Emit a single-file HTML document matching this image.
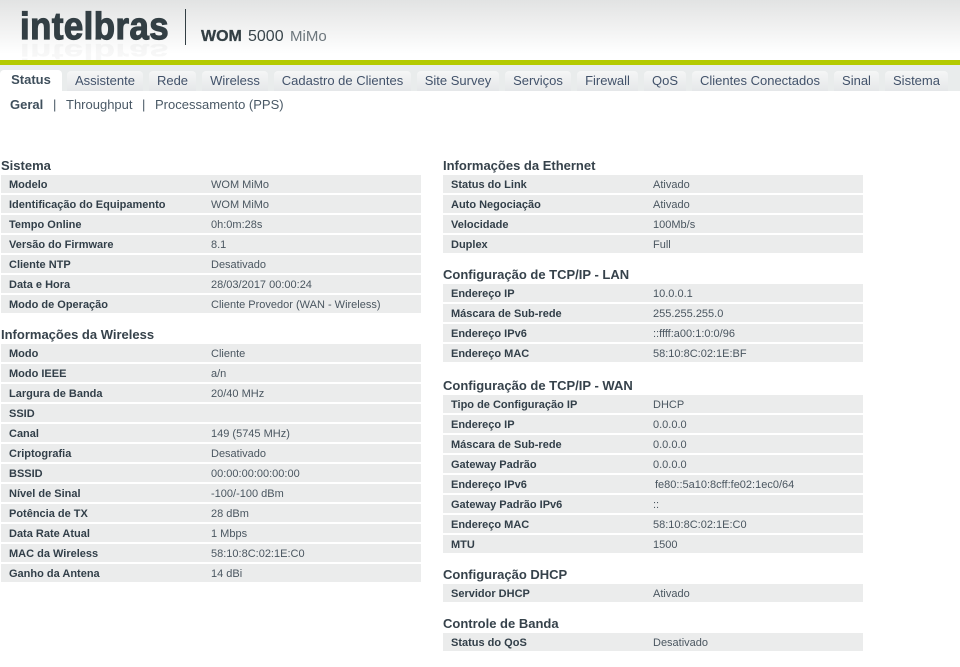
<!DOCTYPE html>
<html><head><meta charset="utf-8">
<style>
html,body{margin:0;padding:0;background:#fff;width:960px;height:667px;overflow:hidden}
body{position:relative;font-family:"Liberation Sans",sans-serif;font-size:11px;color:#4a5660}
.a{position:absolute;white-space:nowrap}
#hd{position:absolute;left:0;top:0;width:960px;height:60px;background:linear-gradient(#e2e3e3,#ffffff 90%)}
#gr{position:absolute;left:0;top:60px;width:960px;height:5px;background:#b4ca00}
#bar{position:absolute;left:0;top:65px;width:960px;height:26px;background:#e9ecec}
.t{position:absolute;top:71px;height:20px;line-height:20px;text-align:center;font-size:13px;color:#42526a;background:linear-gradient(#f5f6f6,#e5e7e9);border-radius:4px 4px 0 0;white-space:nowrap}
.t.on{top:70px;height:21px;background:#fff;color:#3f4f5c;font-weight:bold}
h3{position:absolute;margin:0;font-size:13px;line-height:16px;color:#36424b;font-weight:bold;white-space:nowrap}
.r{position:absolute;width:420px;height:18px;background:#ebecec;line-height:20px;white-space:nowrap}
.r b{position:absolute;left:8px;color:#323f49}
.r span{position:absolute;left:210px}
.s{position:absolute;top:97px;font-size:13px;line-height:16px;color:#4a5966;white-space:nowrap}
.lg{left:20px;top:8px;font-size:38px;line-height:39px;font-weight:bold;color:#333f44;letter-spacing:.5px;-webkit-text-stroke:1.2px #333f44}
</style></head><body>
<div id="hd"></div>
<div class="a lg" style="transform:scaleX(.915);transform-origin:0 0">intelbras</div>
<div class="a lg" style="top:10px;opacity:.035;-webkit-text-stroke:.6px #333f44;transform:scaleX(.915) scaleY(-.62);transform-origin:0 33px">intelbras</div>
<div class="a" style="left:185px;top:9px;width:1px;height:36px;background:#333f44"></div>
<div class="a" style="left:201px;top:27px;font-size:16px;line-height:20px;color:#333f44;font-weight:bold;-webkit-text-stroke:.3px #333f44">WOM</div>
<div class="a" style="left:248px;top:27px;font-size:16px;line-height:20px;color:#3a464c">5000</div>
<div class="a" style="left:290px;top:27px;font-size:15px;line-height:20px;color:#6c767c">MiMo</div>
<div id="gr"></div><div id="bar"></div>
<div class="t on" style="left:0;width:62px">Status</div>
<div class="t" style="left:67px;width:76px">Assistente</div>
<div class="t" style="left:149px;width:47px">Rede</div>
<div class="t" style="left:202px;width:66px">Wireless</div>
<div class="t" style="left:274px;width:137px">Cadastro de Clientes</div>
<div class="t" style="left:417px;width:82px">Site Survey</div>
<div class="t" style="left:505px;width:66px">Serviços</div>
<div class="t" style="left:577px;width:61px">Firewall</div>
<div class="t" style="left:644px;width:42px">QoS</div>
<div class="t" style="left:692px;width:136px">Clientes Conectados</div>
<div class="t" style="left:834px;width:45px">Sinal</div>
<div class="t" style="left:885px;width:63px">Sistema</div>
<div class="s" style="left:10px;color:#3f4f5c"><b>Geral</b></div>
<div class="s" style="left:53px">|</div>
<div class="s" style="left:66px">Throughput</div>
<div class="s" style="left:142px">|</div>
<div class="s" style="left:155px">Processamento (PPS)</div>

<h3 style="left:1px;top:158px">Sistema</h3>
<div class="r" style="left:1px;top:175px"><b>Modelo</b><span>WOM MiMo</span></div>
<div class="r" style="left:1px;top:195px"><b>Identificação do Equipamento</b><span>WOM MiMo</span></div>
<div class="r" style="left:1px;top:215px"><b>Tempo Online</b><span>0h:0m:28s</span></div>
<div class="r" style="left:1px;top:235px"><b>Versão do Firmware</b><span>8.1</span></div>
<div class="r" style="left:1px;top:255px"><b>Cliente NTP</b><span>Desativado</span></div>
<div class="r" style="left:1px;top:275px"><b>Data e Hora</b><span>28/03/2017 00:00:24</span></div>
<div class="r" style="left:1px;top:295px"><b>Modo de Operação</b><span>Cliente Provedor (WAN - Wireless)</span></div>

<h3 style="left:1px;top:327px">Informações da Wireless</h3>
<div class="r" style="left:1px;top:344px"><b>Modo</b><span>Cliente</span></div>
<div class="r" style="left:1px;top:364px"><b>Modo IEEE</b><span>a/n</span></div>
<div class="r" style="left:1px;top:384px"><b>Largura de Banda</b><span>20/40 MHz</span></div>
<div class="r" style="left:1px;top:404px"><b>SSID</b><span></span></div>
<div class="r" style="left:1px;top:424px"><b>Canal</b><span>149 (5745 MHz)</span></div>
<div class="r" style="left:1px;top:444px"><b>Criptografia</b><span>Desativado</span></div>
<div class="r" style="left:1px;top:464px"><b>BSSID</b><span>00:00:00:00:00:00</span></div>
<div class="r" style="left:1px;top:484px"><b>Nível de Sinal</b><span>-100/-100 dBm</span></div>
<div class="r" style="left:1px;top:504px"><b>Potência de TX</b><span>28 dBm</span></div>
<div class="r" style="left:1px;top:524px"><b>Data Rate Atual</b><span>1 Mbps</span></div>
<div class="r" style="left:1px;top:544px"><b>MAC da Wireless</b><span>58:10:8C:02:1E:C0</span></div>
<div class="r" style="left:1px;top:564px"><b>Ganho da Antena</b><span>14 dBi</span></div>

<h3 style="left:443px;top:158px">Informações da Ethernet</h3>
<div class="r" style="left:443px;top:175px"><b>Status do Link</b><span>Ativado</span></div>
<div class="r" style="left:443px;top:195px"><b>Auto Negociação</b><span>Ativado</span></div>
<div class="r" style="left:443px;top:215px"><b>Velocidade</b><span>100Mb/s</span></div>
<div class="r" style="left:443px;top:235px"><b>Duplex</b><span>Full</span></div>

<h3 style="left:443px;top:267px">Configuração de TCP/IP - LAN</h3>
<div class="r" style="left:443px;top:284px"><b>Endereço IP</b><span>10.0.0.1</span></div>
<div class="r" style="left:443px;top:304px"><b>Máscara de Sub-rede</b><span>255.255.255.0</span></div>
<div class="r" style="left:443px;top:324px"><b>Endereço IPv6</b><span>::ffff:a00:1:0:0/96</span></div>
<div class="r" style="left:443px;top:344px"><b>Endereço MAC</b><span>58:10:8C:02:1E:BF</span></div>

<h3 style="left:443px;top:378px">Configuração de TCP/IP - WAN</h3>
<div class="r" style="left:443px;top:395px"><b>Tipo de Configuração IP</b><span>DHCP</span></div>
<div class="r" style="left:443px;top:415px"><b>Endereço IP</b><span>0.0.0.0</span></div>
<div class="r" style="left:443px;top:435px"><b>Máscara de Sub-rede</b><span>0.0.0.0</span></div>
<div class="r" style="left:443px;top:455px"><b>Gateway Padrão</b><span>0.0.0.0</span></div>
<div class="r" style="left:443px;top:475px"><b>Endereço IPv6</b><span style="left:212px">fe80::5a10:8cff:fe02:1ec0/64</span></div>
<div class="r" style="left:443px;top:495px"><b>Gateway Padrão IPv6</b><span>::</span></div>
<div class="r" style="left:443px;top:515px"><b>Endereço MAC</b><span>58:10:8C:02:1E:C0</span></div>
<div class="r" style="left:443px;top:535px"><b>MTU</b><span>1500</span></div>

<h3 style="left:443px;top:567px">Configuração DHCP</h3>
<div class="r" style="left:443px;top:584px"><b>Servidor DHCP</b><span>Ativado</span></div>

<h3 style="left:443px;top:616px">Controle de Banda</h3>
<div class="r" style="left:443px;top:633px"><b>Status do QoS</b><span>Desativado</span></div>
</body></html>
